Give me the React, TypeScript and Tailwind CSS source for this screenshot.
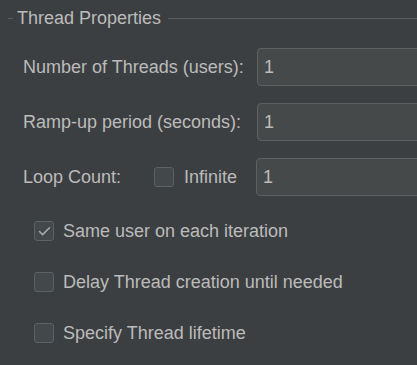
import { Check } from 'lucide-react';

function Field({ value }: { value: string }) {
  return (
    <div className="h-[38px] w-[200px] shrink-0 rounded-[4px] border border-[#5e6162] bg-[#45494a] pl-[6px] flex items-center text-[#bbbbbb]">
      {value}
    </div>
  );
}

function Box({ checked }: { checked?: boolean }) {
  return (
    <div className="h-[20px] w-[20px] shrink-0 rounded-[3px] border border-[#5f6263] bg-[#43494a] flex items-center justify-center">
      {checked && <Check size={15} strokeWidth={2.5} className="text-[#a8a8a8]" />}
    </div>
  );
}

export default function App() {
  return (
    <div
      className="h-[365px] w-[417px] overflow-hidden bg-[#3c3f41] text-[18px] text-[#bbbbbb]"
      style={{ fontFamily: '"Liberation Sans", Arial, sans-serif' }}
    >
      {/* Titled border */}
      <div className="flex h-[36px] items-center">
        <div className="ml-[8px] h-px w-[5px] bg-[#5b5e60]" />
        <span className="ml-[4px] whitespace-nowrap">Thread Properties</span>
        <div className="ml-[7px] h-px flex-1 bg-[#5b5e60]" />
      </div>

      <div className="mt-[12px] flex flex-col gap-[17px]">
        <div className="flex items-center">
          <span className="w-[257px] shrink-0 pl-[23px] whitespace-nowrap">Number of Threads (users):</span>
          <Field value="1" />
        </div>
        <div className="flex items-center">
          <span className="w-[257px] shrink-0 pl-[23px] whitespace-nowrap">Ramp-up period (seconds):</span>
          <Field value="1" />
        </div>
        <div className="flex items-center">
          <span className="w-[154px] shrink-0 pl-[23px] whitespace-nowrap">Loop Count:</span>
          <Box />
          <span className="ml-[10px] w-[72px] shrink-0">Infinite</span>
          <Field value="1" />
        </div>
      </div>

      <div className="mt-[25px] flex flex-col gap-[31px] pl-[34px]">
        <div className="flex h-[20px] items-center">
          <Box checked />
          <span className="ml-[9px] whitespace-nowrap">Same user on each iteration</span>
        </div>
        <div className="flex h-[20px] items-center">
          <Box />
          <span className="ml-[9px] whitespace-nowrap">Delay Thread creation until needed</span>
        </div>
        <div className="flex h-[20px] items-center">
          <Box />
          <span className="ml-[9px] whitespace-nowrap">Specify Thread lifetime</span>
        </div>
      </div>
    </div>
  );
}
